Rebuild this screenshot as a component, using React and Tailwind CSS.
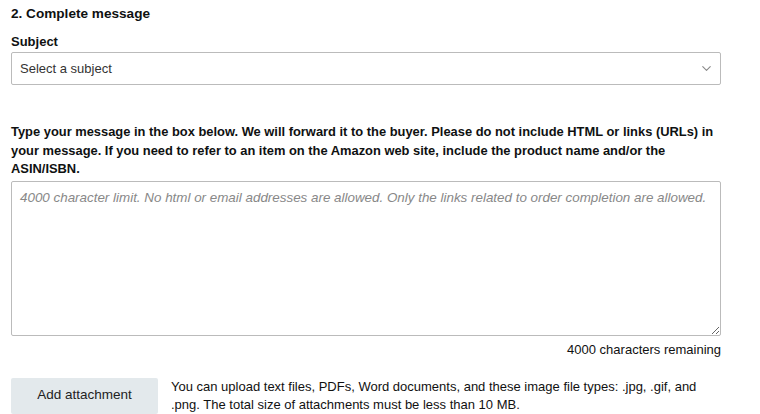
import { ChevronDown } from "lucide-react";

const App = () => {
  return (
    <div
      className="w-[760px] h-[414px] overflow-hidden bg-white text-[#0f1111] px-[11px]"
      style={{ fontFamily: '"Liberation Sans", Arial, sans-serif' }}
    >
      <div className="w-[710px]">
        <h2 className="pt-[5px] text-[13.6px] leading-[18px] font-bold">2. Complete message</h2>

        <label className="block mt-[11px] text-[13px] leading-[16px] font-bold">Subject</label>
        <div className="mt-[2px] h-[33px] border border-[#bbbbbb] rounded-[2px] flex items-center justify-between pl-[8px] pr-[6px]">
          <span className="text-[13px] text-[#333]">Select a subject</span>
          <ChevronDown size={15} strokeWidth={1.8} className="text-[#8a8a8a]" />
        </div>

        <p className="mt-[38px] text-[12.9px] leading-[18.5px] font-bold">
          Type your message in the box below. We will forward it to the buyer. Please do not
          include HTML or links (URLs) in your message. If you need to refer to an item on the
          Amazon web site, include the product name and/or the ASIN/ISBN.
        </p>

        <textarea
          className="block mt-[2px] w-full h-[155px] border border-[#bbbbbb] rounded-[2px] px-[8px] py-[7px] text-[13.4px] leading-[18px] italic placeholder:text-[#888] outline-none resize-y"
          placeholder="4000 character limit. No html or email addresses are allowed. Only the links related to order completion are allowed."
        />

        <div className="mt-[6px] text-right text-[13px] leading-[16px] text-[#111]">
          4000 characters remaining
        </div>

        <div className="mt-[20px] flex gap-[13px]">
          <button className="w-[147px] h-[36px] shrink-0 bg-[#e3e9ec] text-[13.5px] text-[#222] rounded-[2px]">
            Add attachment
          </button>
          <p className="text-[13px] leading-[18px] text-[#111]">
            You can upload text files, PDFs, Word documents, and these image file types: .jpg,
            .gif, and .png. The total size of attachments must be less than 10 MB.
          </p>
        </div>
      </div>
    </div>
  );
};

export default App;
